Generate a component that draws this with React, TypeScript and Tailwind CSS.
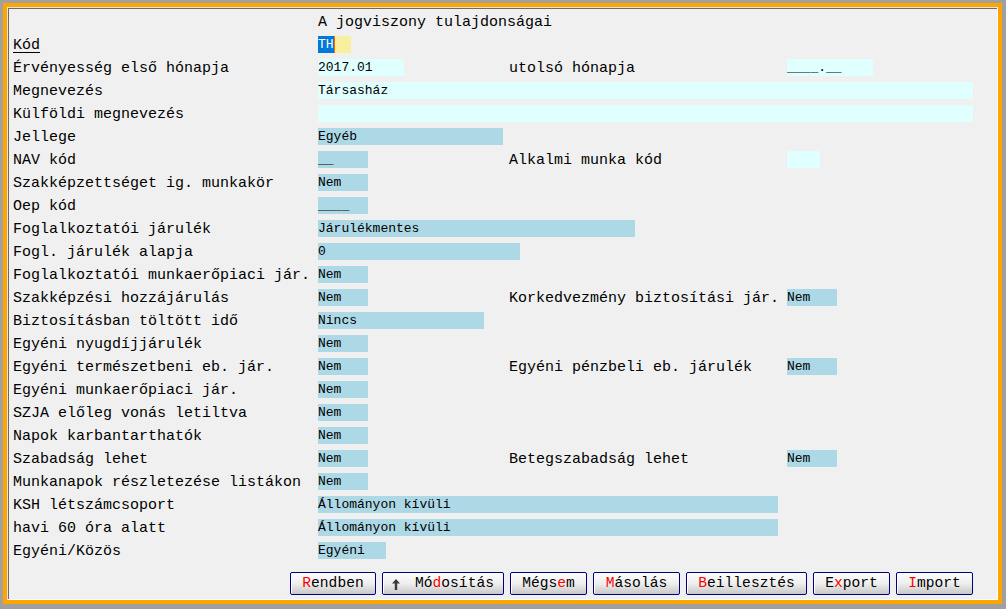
import React from 'react';

type F = { w: string; v?: string; bg: 'cyan' | 'blue' };
type Row = { label: string; field: F; label2?: string; field2?: F };

const rows: Row[] = [
  { label: 'Érvényesség első hónapja', field: { w: 'w-[86px]', v: '2017.01', bg: 'cyan' }, label2: 'utolsó hónapja', field2: { w: 'w-[86px]', v: '____.__', bg: 'cyan' } },
  { label: 'Megnevezés', field: { w: 'w-[655px]', v: 'Társasház', bg: 'cyan' } },
  { label: 'Külföldi megnevezés', field: { w: 'w-[655px]', bg: 'cyan' } },
  { label: 'Jellege', field: { w: 'w-[185px]', v: 'Egyéb', bg: 'blue' } },
  { label: 'NAV kód', field: { w: 'w-[50px]', v: '__', bg: 'blue' }, label2: 'Alkalmi munka kód', field2: { w: 'w-[33px]', bg: 'cyan' } },
  { label: 'Szakképzettséget ig. munkakör', field: { w: 'w-[50px]', v: 'Nem', bg: 'blue' } },
  { label: 'Oep kód', field: { w: 'w-[50px]', v: '____', bg: 'blue' } },
  { label: 'Foglalkoztatói járulék', field: { w: 'w-[317px]', v: 'Járulékmentes', bg: 'blue' } },
  { label: 'Fogl. járulék alapja', field: { w: 'w-[202px]', v: '0', bg: 'blue' } },
  { label: 'Foglalkoztatói munkaerőpiaci jár.', field: { w: 'w-[50px]', v: 'Nem', bg: 'blue' } },
  { label: 'Szakképzési hozzájárulás', field: { w: 'w-[50px]', v: 'Nem', bg: 'blue' }, label2: 'Korkedvezmény biztosítási jár.', field2: { w: 'w-[50px]', v: 'Nem', bg: 'blue' } },
  { label: 'Biztosításban töltött idő', field: { w: 'w-[166px]', v: 'Nincs', bg: 'blue' } },
  { label: 'Egyéni nyugdíjjárulék', field: { w: 'w-[50px]', v: 'Nem', bg: 'blue' } },
  { label: 'Egyéni természetbeni eb. jár.', field: { w: 'w-[50px]', v: 'Nem', bg: 'blue' }, label2: 'Egyéni pénzbeli eb. járulék', field2: { w: 'w-[50px]', v: 'Nem', bg: 'blue' } },
  { label: 'Egyéni munkaerőpiaci jár.', field: { w: 'w-[50px]', v: 'Nem', bg: 'blue' } },
  { label: 'SZJA előleg vonás letiltva', field: { w: 'w-[50px]', v: 'Nem', bg: 'blue' } },
  { label: 'Napok karbantarthatók', field: { w: 'w-[50px]', v: 'Nem', bg: 'blue' } },
  { label: 'Szabadság lehet', field: { w: 'w-[50px]', v: 'Nem', bg: 'blue' }, label2: 'Betegszabadság lehet', field2: { w: 'w-[50px]', v: 'Nem', bg: 'blue' } },
  { label: 'Munkanapok részletezése listákon', field: { w: 'w-[50px]', v: 'Nem', bg: 'blue' } },
  { label: 'KSH létszámcsoport', field: { w: 'w-[460px]', v: 'Állományon kívüli', bg: 'blue' } },
  { label: 'havi 60 óra alatt', field: { w: 'w-[460px]', v: 'Állományon kívüli', bg: 'blue' } },
  { label: 'Egyéni/Közös', field: { w: 'w-[68px]', v: 'Egyéni', bg: 'blue' } },
];

function Field({ f }: { f: F }) {
  return (
    <div
      className={`${f.w} h-[17px] flex items-center text-[13px] leading-none whitespace-pre text-black ${
        f.bg === 'cyan' ? 'bg-[#e0ffff]' : 'bg-[#add8e6]'
      }`}
    >
      {f.v}
    </div>
  );
}

const buttons: { w: string; pre: string; hot: string; post: string; arrow?: boolean }[] = [
  { w: 'w-[86px]', pre: '', hot: 'R', post: 'endben' },
  { w: 'w-[122px]', pre: 'Mó', hot: 'd', post: 'osítás', arrow: true },
  { w: 'w-[77px]', pre: 'Mégs', hot: 'e', post: 'm' },
  { w: 'w-[87px]', pre: '', hot: 'M', post: 'ásolás' },
  { w: 'w-[121px]', pre: '', hot: 'B', post: 'eillesztés' },
  { w: 'w-[77px]', pre: 'E', hot: 'x', post: 'port' },
  { w: 'w-[77px]', pre: '', hot: 'I', post: 'mport' },
];

export default function App() {
  return (
    <div
      className="w-[1006px] h-[609px] bg-[#a0a0a0] pl-[3px] pt-[3px] pr-[4px] pb-[5px] overflow-hidden"
      style={{ fontFamily: '"Liberation Mono", "Courier New", monospace' }}
    >
      <div className="w-full h-full border-[4px] border-[#ffa500]">
        <div className="w-full h-full border border-t-[#e3e3e3] border-l-[#e3e3e3] border-r-white border-b-white">
          <div className="w-full h-full border-t border-l border-t-[#696969] border-l-[#696969] bg-[#f0f0f0] pl-[4px] pt-[1px] text-[15px] text-black">
            {/* title */}
            <div className="h-[23px] flex items-center pl-[305px] pt-[4px]">A jogviszony tulajdonságai</div>

            {/* Kód */}
            <div className="h-[23px] flex items-center">
              <div className="w-[305px] pt-[4px]">
                <span className="underline underline-offset-[3px]">Kód</span>
              </div>
              <div className="flex h-[17px] text-[13px] leading-none">
                <div className="w-[16px] bg-[#0078d7] text-white flex items-center">TH</div>
                <div className="w-[1px] bg-[#ff6a00]" />
                <div className="w-[16px] bg-[#f8f0a0]" />
              </div>
            </div>

            {rows.map((r) => (
              <div key={r.label} className="h-[23px] flex items-center whitespace-pre">
                <div className="w-[305px] shrink-0 pt-[4px]">{r.label}</div>
                {r.label2 ? (
                  <>
                    <div className="w-[191px] shrink-0">
                      <Field f={r.field} />
                    </div>
                    <div className="w-[278px] shrink-0 pt-[4px]">{r.label2}</div>
                    {r.field2 && <Field f={r.field2} />}
                  </>
                ) : (
                  <Field f={r.field} />
                )}
              </div>
            ))}

            {/* buttons */}
            <div className="flex gap-[6px] pl-[277px] mt-[10px]">
              {buttons.map((b) => (
                <button
                  key={b.hot + b.post}
                  className={`${b.w} h-[23px] border border-[#000080] rounded-[2px] bg-gradient-to-b from-[#fdfdfd] via-[#eeeeee] to-[#c8c8c8] shadow-[inset_1px_1px_0_#ffffff] flex items-center justify-center text-[14.6px] leading-none text-black`}
                >
                  {b.arrow && (
                    <svg width="8" height="11" viewBox="0 0 8 11" className="mr-[15px] mt-[2px]">
                      <path d="M4 0 L8 4.5 L5.2 4.5 L5.2 11 L2.8 11 L2.8 4.5 L0 4.5 Z" fill="#3a3a3a" />
                    </svg>
                  )}
                  <span>
                    {b.pre}
                    <span className="text-[#ff0000]">{b.hot}</span>
                    {b.post}
                  </span>
                </button>
              ))}
            </div>
          </div>
        </div>
      </div>
    </div>
  );
}
